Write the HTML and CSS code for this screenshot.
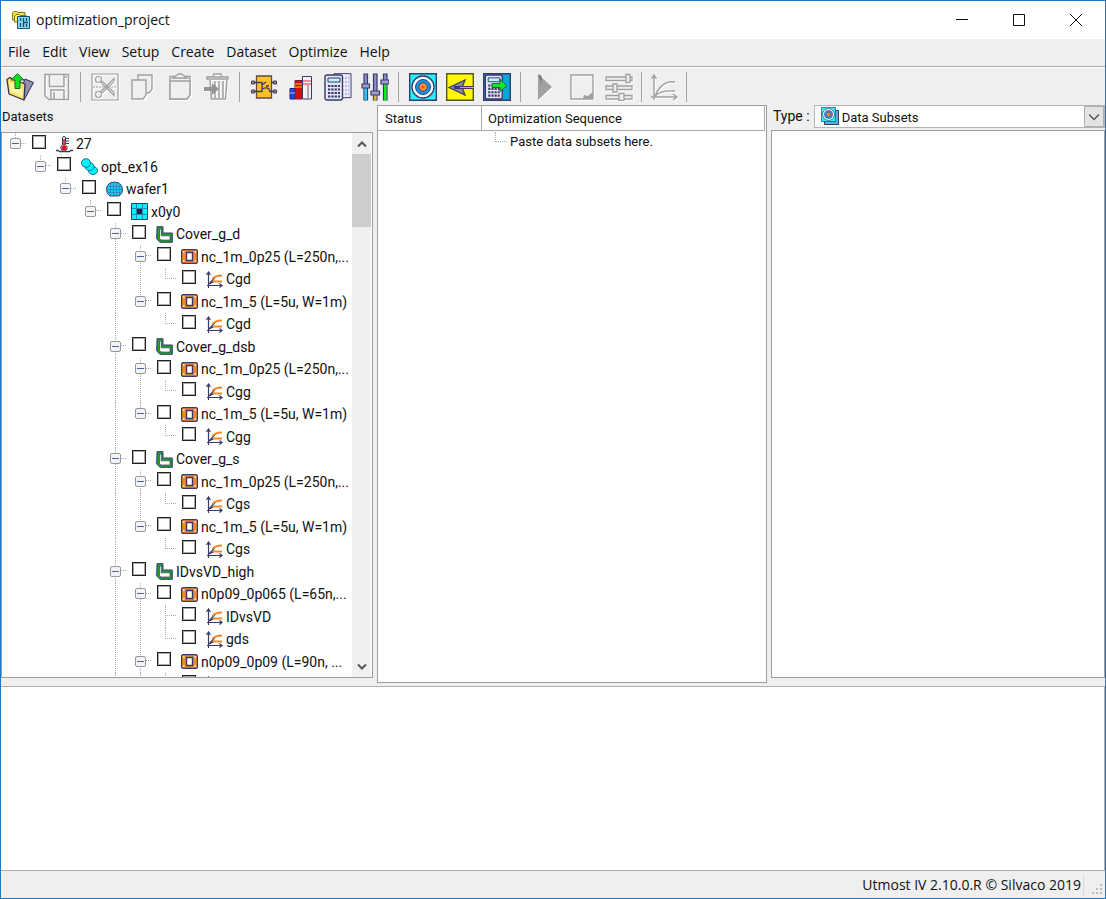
FILE: index.html
```html
<!DOCTYPE html>
<html lang="en">
<head>
<meta charset="utf-8">
<title>optimization_project</title>
<link rel="stylesheet" href="styles.css">
</head>
<body>
<svg class="defs" aria-hidden="true">
  <symbol id="temp" viewBox="0 0 17 17"><path d="M0 14.500h2l1.500 1h10l1.500-1h2" stroke="#39396b" stroke-width="1.300" fill="none"/><path d="M6.500 9V2Q6.500.500 8 .500T9.500 2V9a3.200 3.200 0 1 1-3 0z" fill="#fff" stroke="#39396b"/><path d="M8 3v7" stroke="#e01818" stroke-width="1.600"/><circle cx="8" cy="12" r="2.600" fill="#e01818"/><path d="M10 2.500h3M10 5h3M10 7.500h3" stroke="#39396b"/></symbol>
  <symbol id="lot" viewBox="0 0 17 17"><g fill="#00f5ff" stroke="#1c6f8a"><ellipse cx="12" cy="12.500" rx="4.500" ry="4"/><ellipse cx="8.500" cy="8.500" rx="4.500" ry="4"/><ellipse cx="5" cy="5" rx="4.500" ry="4.300"/></g></symbol>
  <symbol id="wafer" viewBox="0 0 17 17"><path d="M4 2Q8.500 0 13 2Q16.500 4 16.500 8.500T13 15H4Q.500 13 .500 8.500T4 2z" fill="#20c8ee" stroke="#39396b"/><path d="M4.500 2v13M7.500 1v14M10.500 1v14M13.500 2v12M1 5.500h15M1 8.500h15M1 11.500h15" stroke="#2a86b8" stroke-width=".800"/></symbol>
  <symbol id="site" viewBox="0 0 17 17"><path d="M.500.500h16v16H.500z" fill="#00f5ff" stroke="#39396b"/><path d="M5.500 1v15M11.500 1v15M1 5.500h15M1 11.500h15" stroke="#258daf"/><path d="M6 6h5v5H6z" fill="#20205c"/></symbol>
  <symbol id="setup" viewBox="0 0 17 17"><path d="M1 .700h6V7h9.300v9.300H4L.700 13z" fill="#20a030" stroke="#39396b" stroke-linejoin="round"/><path d="M3.500 3v9.500L5 14h9V9.800H5.200V3z" fill="#fff" stroke="#39396b" stroke-width=".700"/></symbol>
  <symbol id="device" viewBox="0 0 17 17"><rect x=".600" y="1.600" width="15.800" height="13.800" rx="1.500" fill="#f58a28" stroke="#39396b" stroke-width="1.200"/><path d="M5.500 4.500h6v8h-6z" fill="#fff" stroke="#39396b" stroke-width="1.400"/><path d="M2 4h1.500M2 13h1.500M13.500 4H15M13.500 13H15" stroke="#fff" stroke-width="1.500"/></symbol>
  <symbol id="curve" viewBox="0 0 17 17"><path d="M2.500 17V1M1 14.500h15M.500 4l2-3 2 3M13.500 12.500l2.500 2-2.500 2" fill="none" stroke="#39396b" stroke-width="1.200"/><path d="M3 13L9 6.500M3 13L9 10" fill="none" stroke="#39396b" stroke-width="1.200"/><path d="M6.500 8Q9 4.500 16 4.500M7 10.500h9" fill="none" stroke="#f58a28" stroke-width="2"/></symbol>
  <symbol id="target" viewBox="0 0 28 28"><path d="M.700.700h26.600v26.600H.700z" fill="#20f4ff" stroke="#39396b" stroke-width="1.400"/><circle cx="14" cy="14" r="11" fill="#fff" stroke="#39396b" stroke-width="1.300"/><circle cx="14" cy="14" r="7.500" fill="#1597ee" stroke="#39396b" stroke-width="1"/><circle cx="14" cy="14" r="4.200" fill="#ff9a30" stroke="#39396b" stroke-width="1"/><circle cx="14" cy="14" r="1.600" fill="#ff4a20"/></symbol>
  <symbol id="calc" viewBox="0 0 20 27"><rect x="1" y="1" width="17.500" height="25" rx="2" fill="#e4e5f2" stroke="#39396b" stroke-width="1.400"/><path d="M4 4h12v4H4z" fill="#b9f4ff" stroke="#39396b"/><path d="M4 12h12M4 15.500h12M4 19h12M4 22.500h12" stroke="#39396b" stroke-width="2.200" stroke-dasharray="2.300 1"/></symbol>
</svg>

<div class="window">
  <header class="titlebar">
    <svg class="app-icon" viewBox="0 0 18 18"><path d="M.500 8V2l1.500-1.500h3l1 1h7V9H.500z" fill="#ffe23a" stroke="#77742c"/><path d="M2.500 11V5L4 3.500h3l1 1h6V11z" fill="#fff07a" stroke="#77742c"/><path d="M5.500 5.500h12v12h-12z" fill="#86dcf4" stroke="#1c4d70"/><path d="M8.500 7v3M8.500 12v4M11.500 7v9M14.500 7v3M14.500 13v3M11 11.500h5" stroke="#17466a" stroke-width="1.300"/></svg>
    <h1 class="title">optimization_project</h1>
    <div class="controls">
      <button aria-label="Minimize"><svg viewBox="0 0 12 12"><path d="M0 5.500h12"/></svg></button>
      <button aria-label="Maximize"><svg viewBox="0 0 12 12"><path d="M.500.500h11v11H.500z"/></svg></button>
      <button aria-label="Close"><svg viewBox="0 0 12 12"><path d="M0 0l12 12M12 0L0 12"/></svg></button>
    </div>
  </header>

  <nav class="menubar">
    <button>File</button><button>Edit</button><button>View</button><button>Setup</button><button>Create</button><button>Dataset</button><button>Optimize</button><button>Help</button>
  </nav>

  <div class="toolbar">
    <button class="tool" aria-label="Open"><svg viewBox="0 0 28 28"><path d="M19 6l8.500 3.500L18 27l-5-6z" fill="#8f92a8" stroke="#30305c" stroke-linejoin="round"/><path d="M1 6.500l3-2 3 2 12 4.500-1 16L3 21z" fill="#ffe060" stroke="#30305c" stroke-width="1.300" stroke-linejoin="round"/><path d="M3 9l13 5 1 10L5 19z" fill="#fff3a8"/><path d="M11.500.700L18 7h-4v8.500H9V7H5z" fill="#10e020" stroke="#176b28"/></svg></button>
    <button class="tool" aria-label="Save" disabled><svg viewBox="0 0 28 28"><g fill="none" stroke="#a0a0a0" stroke-width="1.500"><path d="M2 1.500h23.500v25H6L2 23z"/><path d="M6.500 1.500v12H21v-12M8 26V17h13v9M11 19v7M22 4h2"/></g></svg></button>
    <span class="sep"></span>
    <button class="tool" aria-label="Cut" disabled><svg viewBox="0 0 28 28"><g fill="none" stroke="#a0a0a0" stroke-width="1.200"><path d="M1 1h26v26H1z"/><circle cx="7.500" cy="6.500" r="3"/><circle cx="7.500" cy="21.500" r="3"/><path d="M9.500 9L23 22.500v-3L11 8M9.500 19L23 5.500v3L11 20"/><path d="M2 14h24" stroke-dasharray="2 1"/></g></svg></button>
    <button class="tool" aria-label="Copy" disabled><svg viewBox="0 0 28 28"><g fill="#efefef" stroke="#a0a0a0" stroke-width="1.400"><path d="M10 2h14v14l-3 4H10z"/><path d="M4 7h14v15l-3 4H4z"/></g></svg></button>
    <button class="tool" aria-label="Paste" disabled><svg viewBox="0 0 28 28"><g fill="#efefef" stroke="#a0a0a0" stroke-width="1.400"><path d="M5 3.500h20V22l-3 4H5z"/><path d="M8 8h17v14l-3 4H5V8z"/><path d="M8 5l4-3Q15-.500 18 2l4 3z"/></g></svg></button>
    <button class="tool" aria-label="Delete" disabled><svg viewBox="0 0 28 28"><g fill="none" stroke="#a0a0a0" stroke-width="1.500"><path d="M5 6V4h21v2zM11 4l1-3h7l1 3M8 7l1.500 19h14L25 7M13 8v17M17 8v17M21 8v17"/></g><path d="M2 14h8v-4l7 6-7 6v-4H2z" fill="#959595"/></svg></button>
    <span class="sep"></span>
    <button class="tool" aria-label="Netlist"><svg viewBox="0 0 28 28"><path d="M6.500 3h15v22h-15z" fill="#ffc02a" stroke="#604c40" stroke-width="1.300"/><path d="M3 9.500h9v9H3M12 12l4-3M16 13h3M21 9.500h4M12 16q7-3 8 2.500h5" fill="none" stroke="#39396b" stroke-width="1.300"/><g fill="#bd8845" stroke="#39396b"><path d="M1.500 8h3v3h-3zM1.500 17h3v3h-3zM23.500 8h3v3h-3zM23.500 17h3v3h-3z"/></g></svg></button>
    <button class="tool" aria-label="Library"><svg viewBox="0 0 28 28"><path d="M3 15.500h5V26H3z" fill="#2048f0" stroke="#202080"/><path d="M8 7.500h7V26H8z" fill="#d01010" stroke="#70203c"/><path d="M15.500 3.500h9V26h-9z" fill="#f1f1f6" stroke="#39396b"/><path d="M8 11h7M8 14h7" stroke="#ffd020" stroke-width="1.200"/><path d="M16 8h8M16 11h8" stroke="#e03030" stroke-width="1.200"/><path d="M21 12v13" stroke="#a9aac5" stroke-width="2"/><path d="M3 20h5" stroke="#9cc2ff"/></svg></button>
    <button class="tool" aria-label="Spreadsheet"><svg viewBox="0 0 28 28"><path d="M10 .700h17v24H10z" fill="#fff" stroke="#39396b"/><path d="M14 1v23M18 1v23M22 1v23M25 1v23M11 5h16M11 9h16M11 13h16M11 17h16M11 21h16" stroke="#b8b8ec"/><use href="#calc" x="0" y="1" width="20" height="27"/></svg></button>
    <button class="tool" aria-label="Parameters"><svg viewBox="0 0 28 28"><g fill="#8c90c4" stroke="#39396b" stroke-width="1.200"><path d="M3 1h3.500v26H3zM12.500 1H16v26h-3.500zM22.500 1H26v26h-3.500z"/></g><path d="M3.500 15h2.500v12H3.500z" fill="#20c8ff"/><path d="M13 22h2.500v5H13z" fill="#ffb020"/><path d="M23 12h2.500v15H23z" fill="#10f010"/><g fill="#9ea0d0" stroke="#39396b" stroke-width="1.200"><path d="M1 11h7.500v4H1zM10 18h8.500v4H10zM20 7h8v4h-8z"/></g></svg></button>
    <span class="sep"></span>
    <button class="tool" aria-label="Targets"><svg><use href="#target"/></svg></button>
    <button class="tool" aria-label="Constraints"><svg viewBox="0 0 28 28"><path d="M.700.700h26.600v26.600H.700z" fill="#fff800" stroke="#55551e" stroke-width="1.400"/><path d="M3 14.500L19 7l-3 7.500L19 22z" fill="#8b8ca0" stroke="#39396b" stroke-width="1.300"/><path d="M8 14.500h20" stroke="#39396b" stroke-width="3"/><path d="M14 14.500h14" stroke="#dfb020"/></svg></button>
    <button class="tool" aria-label="Export"><svg viewBox="0 0 28 28"><path d="M.700.700h26.600v26.600H.700z" fill="#08a6d8" stroke="#39396b" stroke-width="1.400"/><use href="#calc" x="1" y="1" width="20" height="26"/><path d="M9 10.500h8v-4l7 6-7 6v-4H9z" fill="#10e820" stroke="#176b40"/></svg></button>
    <span class="sep"></span>
    <button class="tool" aria-label="Run" disabled><svg viewBox="0 0 28 28"><path d="M7 1v26l14-13z" fill="#a0a0a0"/><path d="M7.500 1l3 2v9z" fill="#777"/></svg></button>
    <button class="tool" aria-label="Stop" disabled><svg viewBox="0 0 28 28"><path d="M3 2h22v24H3z" fill="none" stroke="#a0a0a0" stroke-width="1.400"/><path d="M15 26l1-4 4 1 5-4v7z" fill="#a0a0a0"/></svg></button>
    <button class="tool" aria-label="Settings" disabled><svg viewBox="0 0 28 28"><g fill="#efefef" stroke="#a0a0a0" stroke-width="1.300"><path d="M1 4h26v3.500H1zM1 13h26v3.500H1zM1 22.500h26V26H1z"/><path d="M21 1.500h4v8h-4zM8 11h4v8H8zM14 20.500h5v7h-5z"/></g></svg></button>
    <span class="sep narrow"></span>
    <button class="tool" aria-label="Plot" disabled><svg viewBox="0 0 28 28"><path d="M4 27V3M1 24h25M1.500 6L4 2l2.500 4M23 21l4 3-4 3M5 23Q12 7 25 9M5 23q6-6 20-5" fill="none" stroke="#a0a0a0" stroke-width="1.400"/></svg></button>
    <span class="sep narrow"></span>
  </div>

  <main class="work">
    <section class="pane left">
      <h2 class="label">Datasets</h2>
      <div class="box tree-box">
        <ul class="tree">
          <li><span class="node"><button aria-label="Collapse"></button></span><label><input type="checkbox"><svg><use href="#temp"/></svg><b>27</b></label></li>
          <li><i></i><span class="node"><button aria-label="Collapse"></button></span><label><input type="checkbox"><svg><use href="#lot"/></svg><b>opt_ex16</b></label></li>
          <li><i></i><i></i><span class="node"><button aria-label="Collapse"></button></span><label><input type="checkbox"><svg><use href="#wafer"/></svg><b>wafer1</b></label></li>
          <li><i></i><i></i><i></i><span class="node"><button aria-label="Collapse"></button></span><label><input type="checkbox"><svg><use href="#site"/></svg><b>x0y0</b></label></li>

          <li><i></i><i></i><i></i><i></i><span class="node more"><button aria-label="Collapse"></button></span><label><input type="checkbox"><svg><use href="#setup"/></svg><b>Cover_g_d</b></label></li>
          <li><i></i><i></i><i></i><i></i><i class="on"></i><span class="node more"><button aria-label="Collapse"></button></span><label><input type="checkbox"><svg><use href="#device"/></svg><b>nc_1m_0p25 (L=250n,...</b></label></li>
          <li><i></i><i></i><i></i><i></i><i class="on"></i><i class="on"></i><span class="node"></span><label><input type="checkbox"><svg><use href="#curve"/></svg><b>Cgd</b></label></li>
          <li><i></i><i></i><i></i><i></i><i class="on"></i><span class="node"><button aria-label="Collapse"></button></span><label><input type="checkbox"><svg><use href="#device"/></svg><b>nc_1m_5 (L=5u, W=1m)</b></label></li>
          <li><i></i><i></i><i></i><i></i><i class="on"></i><i></i><span class="node"></span><label><input type="checkbox"><svg><use href="#curve"/></svg><b>Cgd</b></label></li>

          <li><i></i><i></i><i></i><i></i><span class="node more"><button aria-label="Collapse"></button></span><label><input type="checkbox"><svg><use href="#setup"/></svg><b>Cover_g_dsb</b></label></li>
          <li><i></i><i></i><i></i><i></i><i class="on"></i><span class="node more"><button aria-label="Collapse"></button></span><label><input type="checkbox"><svg><use href="#device"/></svg><b>nc_1m_0p25 (L=250n,...</b></label></li>
          <li><i></i><i></i><i></i><i></i><i class="on"></i><i class="on"></i><span class="node"></span><label><input type="checkbox"><svg><use href="#curve"/></svg><b>Cgg</b></label></li>
          <li><i></i><i></i><i></i><i></i><i class="on"></i><span class="node"><button aria-label="Collapse"></button></span><label><input type="checkbox"><svg><use href="#device"/></svg><b>nc_1m_5 (L=5u, W=1m)</b></label></li>
          <li><i></i><i></i><i></i><i></i><i class="on"></i><i></i><span class="node"></span><label><input type="checkbox"><svg><use href="#curve"/></svg><b>Cgg</b></label></li>

          <li><i></i><i></i><i></i><i></i><span class="node more"><button aria-label="Collapse"></button></span><label><input type="checkbox"><svg><use href="#setup"/></svg><b>Cover_g_s</b></label></li>
          <li><i></i><i></i><i></i><i></i><i class="on"></i><span class="node more"><button aria-label="Collapse"></button></span><label><input type="checkbox"><svg><use href="#device"/></svg><b>nc_1m_0p25 (L=250n,...</b></label></li>
          <li><i></i><i></i><i></i><i></i><i class="on"></i><i class="on"></i><span class="node"></span><label><input type="checkbox"><svg><use href="#curve"/></svg><b>Cgs</b></label></li>
          <li><i></i><i></i><i></i><i></i><i class="on"></i><span class="node"><button aria-label="Collapse"></button></span><label><input type="checkbox"><svg><use href="#device"/></svg><b>nc_1m_5 (L=5u, W=1m)</b></label></li>
          <li><i></i><i></i><i></i><i></i><i class="on"></i><i></i><span class="node"></span><label><input type="checkbox"><svg><use href="#curve"/></svg><b>Cgs</b></label></li>

          <li><i></i><i></i><i></i><i></i><span class="node more"><button aria-label="Collapse"></button></span><label><input type="checkbox"><svg><use href="#setup"/></svg><b>IDvsVD_high</b></label></li>
          <li><i></i><i></i><i></i><i></i><i class="on"></i><span class="node more"><button aria-label="Collapse"></button></span><label><input type="checkbox"><svg><use href="#device"/></svg><b>n0p09_0p065 (L=65n,...</b></label></li>
          <li><i></i><i></i><i></i><i></i><i class="on"></i><i class="on"></i><span class="node more"></span><label><input type="checkbox"><svg><use href="#curve"/></svg><b>IDvsVD</b></label></li>
          <li><i></i><i></i><i></i><i></i><i class="on"></i><i class="on"></i><span class="node"></span><label><input type="checkbox"><svg><use href="#curve"/></svg><b>gds</b></label></li>
          <li><i></i><i></i><i></i><i></i><i class="on"></i><span class="node more"><button aria-label="Collapse"></button></span><label><input type="checkbox"><svg><use href="#device"/></svg><b>n0p09_0p09 (L=90n, ...</b></label></li>
          <li><i></i><i></i><i></i><i></i><i class="on"></i><i class="on"></i><span class="node more"></span><label><input type="checkbox" aria-label="Curve"><svg><use href="#curve"/></svg></label></li>
        </ul>
        <div class="scrollbar">
          <button aria-label="Scroll up"><svg viewBox="0 0 10 8"><path d="M1 6.500l4-4 4 4"/></svg></button>
          <div class="thumb"></div>
          <button class="down" aria-label="Scroll down"><svg viewBox="0 0 10 8"><path d="M1 1.500l4 4 4-4"/></svg></button>
        </div>
      </div>
    </section>

    <section class="box sequence">
      <table>
        <thead><tr><th class="status">Status</th><th>Optimization Sequence</th></tr></thead>
        <tbody><tr><td></td><td><div class="hint"><span class="stub"></span>Paste data subsets here.</div></td></tr></tbody>
      </table>
    </section>

    <section class="pane right">
      <div class="type-row">
        <label for="type">Type :</label>
        <div class="combo">
          <svg class="combo-icon" viewBox="0 0 18 18"><path d="M3.500 3.500h14v14h-14z" fill="#4bb5d8" stroke="#39396b"/><use href="#target" width="15" height="15"/></svg>
          <select id="type"><option>Data Subsets</option></select>
          <span class="drop"><svg viewBox="0 0 10 8"><path d="M0 1.500l5 5 5-5"/></svg></span>
        </div>
      </div>
      <div class="box subsets"></div>
    </section>
  </main>

  <section class="log" aria-label="Log"></section>

  <footer class="statusbar">
    <span class="version">Utmost IV 2.10.0.R © Silvaco 2019</span>
    <svg class="grip" viewBox="0 0 11 11"><path d="M8 0h2v2H8zM4 4h2v2H4zM8 4h2v2H8zM0 8h2v2H0zM4 8h2v2H4zM8 8h2v2H8z" fill="#bcbcbc"/></svg>
  </footer>
</div>
</body>
</html>
```
FILE: styles.css
```css
* { box-sizing: border-box; }
body { margin: 0; color: #111; font: 14px/20px Roboto, "Liberation Sans", sans-serif; }
button { padding: 0; border: 0; background: none; color: inherit; font: inherit; }
h1, h2 { margin: 0; font-weight: 400; font-size: 14px; }
svg { display: block; flex: none; }
.defs { display: none; }

.window {
  display: grid;
  grid-template-rows: auto auto auto minmax(0, 578fr) minmax(0, 188fr) auto;
  height: 100vh;
  border: 1px solid #1979ca;
  background: #efefef;
}

.titlebar { display: flex; align-items: center; height: 38px; padding-left: 11px; background: #fff; font-family: "Open Sans", "Noto Sans", sans-serif; }
.app-icon { width: 18px; height: 18px; }
.title { margin-left: 6px; }
.controls { display: flex; margin-left: auto; padding-right: 1px; }
.controls button { display: grid; place-items: center; width: 57px; height: 36px; }
.controls svg { width: 12px; height: 12px; fill: none; stroke: #111; }

.menubar { display: flex; gap: 12px; height: 28px; padding-left: 7px; font-family: "Open Sans", "Noto Sans", sans-serif; border-bottom: 1px solid #a8a8a8; }
.menubar button { height: 25px; }

.toolbar { display: flex; align-items: center; height: 38px; border-top: 1px solid #fff; }
.tool { display: grid; place-items: center; width: 37px; height: 36px; }
.tool svg { width: 28px; height: 28px; }
.tool:disabled svg { filter: drop-shadow(1px 1px 0 #fff); }
.sep { display: flex; justify-content: center; width: 11px; }
.sep.narrow { width: 8px; }
.sep::before { content: ""; width: 1px; height: 30px; background: #a0a0a0; }

.work { display: grid; grid-template-columns: minmax(0, 372fr) minmax(0, 390fr) minmax(0, 334fr); gap: 4px; min-height: 0; }
.pane { display: flex; flex-direction: column; min-width: 0; min-height: 0; padding-bottom: 5px; }
.box { border: 1px solid #9a9fa6; background: #fff; min-height: 0; }
.label { height: 27px; padding-left: 1px; font-size: 13px; line-height: 24px; }

.tree-box { display: flex; flex: 1; padding-right: 1px; overflow: hidden; }
.tree { display: grid; flex: 1; grid-auto-rows: 22px 23px; align-content: start; min-width: 0; margin: 0; padding: 0; list-style: none; overflow: hidden; }
.tree li { display: flex; white-space: nowrap; }
.tree i, .node { width: 25px; flex: none; background-repeat: no-repeat; }
.tree i.on { background-image: repeating-linear-gradient(#aaa 0 1px, transparent 1px 2px); background-position: 13px 0; background-size: 1px 100%; }
.node {
  display: flex; align-items: center; justify-content: center; padding-left: 1px;
  background-image: repeating-linear-gradient(#aaa 0 1px, transparent 1px 2px), repeating-linear-gradient(90deg, #aaa 0 1px, transparent 1px 2px);
  background-position: 13px 0, 13px 10px;
  background-size: 1px 11px, 12px 1px;
}
.node.more { background-size: 1px 100%, 12px 1px; }
.node button { width: 11px; height: 11px; margin-bottom: 1px; border: 1px solid #989898; border-radius: 2px; background: linear-gradient(#4b63a7, #4b63a7) center / 7px 1px no-repeat, #f4f4f4; }
.tree label { display: flex; align-items: center; margin-left: 5px; }
.tree input { appearance: none; width: 14px; height: 14px; margin: 0 10px 5px 0; border: 1px solid #222; box-shadow: inset 0 0 0 1px #aaa; background: #fff; }
.tree svg { width: 17px; height: 17px; margin-right: 3px; }
.tree b { font-weight: 400; }

.scrollbar { display: flex; flex-direction: column; width: 19px; background: #f0f0f0; }
.scrollbar button { display: grid; place-items: center; height: 21px; }
.scrollbar .down { margin-top: auto; }
.scrollbar svg { width: 10px; height: 8px; fill: none; stroke: #555; stroke-width: 2; }
.thumb { height: 73px; background: #cdcdcd; }

.sequence { padding-right: 1px; font-size: 13px; }
.sequence table { width: 100%; border-collapse: separate; border-spacing: 0; table-layout: fixed; }
.sequence th { height: 25px; padding: 2px 0 0 6px; border-right: 1px solid #aaa; border-bottom: 1px solid #aaa; font-weight: 400; text-align: left; }
.sequence .status { width: 104px; padding-left: 7px; }
.sequence td { height: 22px; padding: 0; }
.hint { display: flex; padding-left: 13px; }
.stub { width: 12px; height: 10px; margin-right: 3px; border: dotted #aaa; border-width: 0 0 1px 1px; }

.type-row { display: flex; height: 25px; padding-left: 2px; gap: 4px; line-height: 23px; }
.combo { display: flex; flex: 1; height: 23px; border: 1px solid #b4b4b8; background: #fff; }
.combo-icon { width: 18px; height: 18px; margin: 1px 3px 0 6px; }
.combo select { appearance: none; flex: 1; min-width: 0; padding: 0; border: 0; background: none; color: inherit; font: inherit; font-size: 13px; }
.drop { display: grid; place-items: center; width: 20px; border: 1px solid #adadad; background: #e4e4e4; }
.drop svg { width: 10px; height: 8px; fill: none; stroke: #555; stroke-width: 1.5px; }
.subsets { flex: 1; }

.log { margin-top: 3px; border: 1px solid #b0b0b4; border-left: 0; background: #fff; }
.statusbar { display: flex; align-items: center; justify-content: flex-end; height: 27px; font-family: "Open Sans", "Noto Sans", sans-serif; }
.version { padding-right: 2px; border-right: 1px solid #d8d8d8; }
.grip { width: 11px; height: 11px; margin: 10px 2px 0 8px; }
```
